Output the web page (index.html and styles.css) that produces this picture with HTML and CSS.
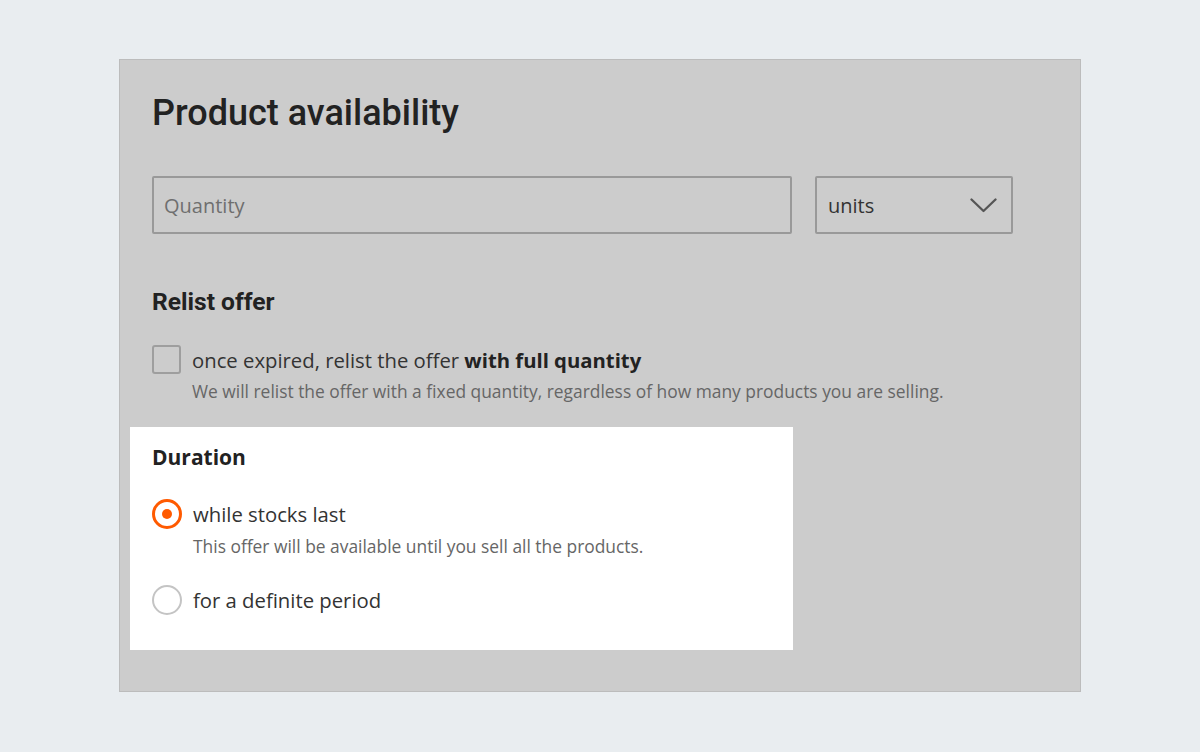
FILE: index.html
```html
<!DOCTYPE html>
<html lang="en">
<head>
<meta charset="utf-8">
<title>Product availability</title>
<link rel="stylesheet" href="styles.css">
</head>
<body>
<div class="page">
  <section class="panel">
    <h1 class="title">Product availability</h1>
    <div class="qty-row">
      <div class="input"><span class="placeholder">Quantity</span></div>
      <div class="select">
        <span class="select-value">units</span>
        <svg class="chevron" width="27" height="15" viewBox="0 0 27 15"><path d="M1.5 1.5 L13.5 13 L25.5 1.5" fill="none" stroke="#555" stroke-width="2.3" stroke-linecap="round" stroke-linejoin="round"/></svg>
      </div>
    </div>

    <h2 class="section-title relist-title">Relist offer</h2>
    <div class="option">
      <span class="checkbox"></span>
      <div class="option-text">
        <div class="option-label">once expired, relist the offer <b>with full quantity</b></div>
        <div class="option-help">We will relist the offer with a fixed quantity, regardless of how many products you are selling.</div>
      </div>
    </div>

    <div class="highlight">
      <h2 class="section-title duration-title">Duration</h2>
      <div class="option">
        <span class="radio checked"></span>
        <div class="option-text">
          <div class="option-label">while stocks last</div>
          <div class="option-help">This offer will be available until you sell all the products.</div>
        </div>
      </div>
      <div class="option option-last">
        <span class="radio"></span>
        <div class="option-text">
          <div class="option-label">for a definite period</div>
        </div>
      </div>
    </div>
  </section>
</div>
</body>
</html>
```

FILE: styles.css
```css
* { box-sizing: border-box; }
html, body { margin: 0; padding: 0; }
body {
  background: #e9edf0;
  font-family: "Open Sans", "Liberation Sans", sans-serif;
  color: #222;
  width: 1200px;
  height: 752px;
  overflow: hidden;
}
.page {
  padding: 59px 119px 0 119px;
}
.panel {
  background: #cccccc;
  border: 1px solid #bcbcbc;
  height: 633px;
  padding: 0 32px 0 32px;
}
.title {
  font-family: Roboto, "Open Sans", sans-serif;
  font-weight: 500;
  font-size: 36px;
  line-height: 42px;
  color: #222;
  margin: 0;
  padding-top: 32px;
}
.qty-row {
  display: flex;
  gap: 23px;
  margin-top: 42px;
  height: 58px;
}
.input {
  width: 640px;
  height: 58px;
  border: 2px solid #999;
  border-radius: 2px;
  display: flex;
  align-items: center;
  padding-left: 10px;
}
.placeholder {
  font-size: 20px;
  color: #6f6f6f;
}
.select {
  width: 198px;
  height: 58px;
  border: 2px solid #999;
  border-radius: 2px;
  display: flex;
  align-items: center;
  justify-content: space-between;
  padding: 0 14px 0 11px;
}
.select-value {
  font-size: 20px;
  color: #333;
}
.section-title {
  font-size: 21px;
  font-weight: 700;
  margin: 0;
  line-height: 28px;
  color: #222;
}
.relist-title {
  font-family: Roboto, "Open Sans", sans-serif;
  font-size: 24.6px;
  margin-top: 54px;
}
.option {
  display: flex;
  gap: 11px;
  margin-top: 29px;
}
.checkbox {
  flex: none;
  width: 29px;
  height: 29px;
  border: 2px solid #9e9e9e;
  border-radius: 3px;
}
.option-text {
  display: flex;
  flex-direction: column;
}
.option-label {
  font-size: 20.3px;
  line-height: 30px;
  color: #333;
}
.option-label b { color: #222; font-weight: 700; }
.option-help {
  font-size: 17.4px;
  line-height: 22px;
  color: #666;
  margin-top: 5px;
}
.highlight {
  background: #fff;
  width: 663px;
  margin-top: 25px;
  margin-left: -22px;
  padding: 16px 22px 35px 22px;
}
.highlight .option { margin-top: 28px; }
.highlight .option-help { margin-top: 6px; }
.highlight .option-last { margin-top: 28px; }
.radio {
  flex: none;
  width: 30px;
  height: 30px;
  border-radius: 50%;
  border: 2px solid #c4c4c4;
  background: #fff;
  position: relative;
}
.radio.checked {
  border: 3px solid #ff5a00;
}
.radio.checked::after {
  content: "";
  position: absolute;
  left: 50%;
  top: 50%;
  width: 10px;
  height: 10px;
  margin: -5px 0 0 -5px;
  border-radius: 50%;
  background: #ff5a00;
}
```
